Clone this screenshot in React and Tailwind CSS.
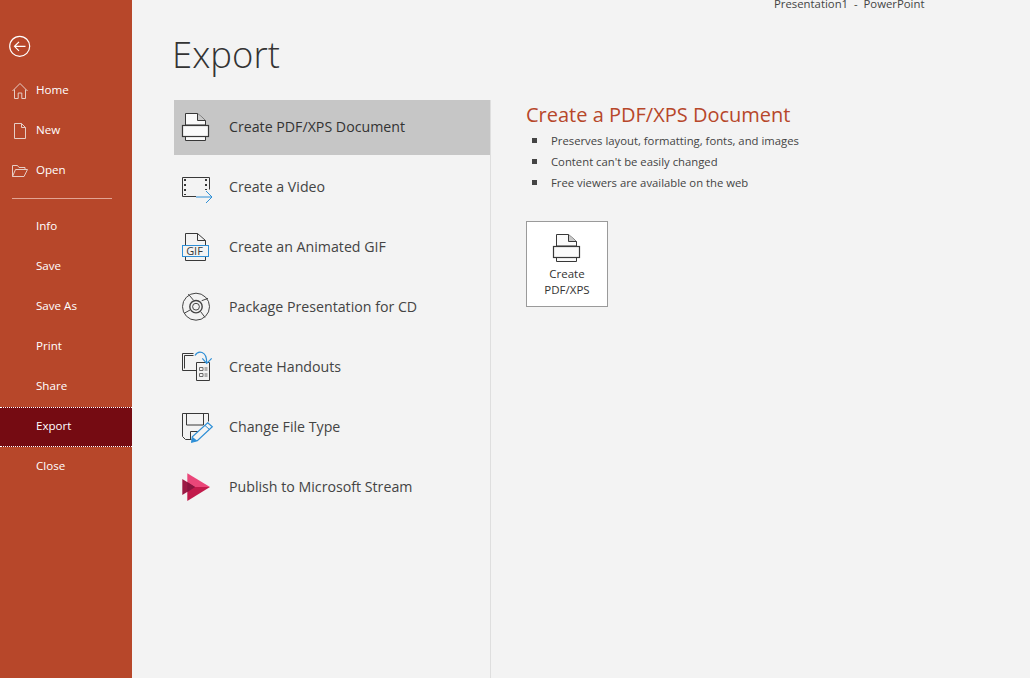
import React from "react";

const font = { fontFamily: '"Open Sans", "Noto Sans", sans-serif' };
const Icon = ({ children }) => (
  <svg width="32" height="32" viewBox="0 0 32 32" fill="none" overflow="visible">
    {children}
  </svg>
);
const D = "#383838";
const B = "#2e8fd6";

const Back = () => (
  <svg width="24" height="24" viewBox="0 0 24 24" fill="none" stroke="#fff" strokeWidth="1.2">
    <circle cx="11.700" cy="12.300" r="10" />
    <path d="M17.500 12.300H6.500M11 7.800l-4.500 4.500 4.500 4.500" />
  </svg>
);
const HomeI = () => (
  <svg width="16" height="16" viewBox="0 0 16 16" fill="none" stroke="#e6cdc5" strokeWidth="1">
    <path d="M.5 8 8 .5 15.500 8M2.500 6.500v9h3.700v-5.500h3.600v5.500h3.700v-9" />
  </svg>
);
const NewI = () => (
  <svg width="12" height="16" viewBox="0 0 12 16" fill="none" stroke="#e6cdc5" strokeWidth="1">
    <path d="M.5.5h7l4 4v11H.5zM7.500.5v4h4" />
  </svg>
);
const OpenI = () => (
  <svg width="16" height="12" viewBox="0 0 16 12" fill="none" stroke="#e6cdc5" strokeWidth="1">
    <path d="M.5 11.500V.5h5l1.500 2h6v2M.5 11.500h11.500l3.500-7H3.500z" />
  </svg>
);

const Printer = () => (
  <Icon>
    <path d="M3.500 14V2.500h12l8 7V14H3.500z" fill="#fafafa" stroke={D} />
    <path d="M15.500 2.500v7h8" fill="#c8c8c8" stroke={D} />
    <path d="M3.500 25v4.500h20V25z" fill="#fafafa" stroke={D} />
    <rect x=".5" y="14.500" width="26" height="11" fill="#fafafa" stroke={D} strokeWidth="1.200" />
  </Icon>
);
const VideoI = () => (
  <Icon>
    <path d="M14 25.500H.5V6.500h27v12" stroke={D} />
    <path d="M3 8v2M3 13v2M3 18v2M3 23v1M24 8v2M24 13v2M24 18v1" stroke={D} strokeWidth="2" />
    <path d="M14 26h15.500M24 20l6 6-6 6" stroke={B} />
  </Icon>
);
const GifI = () => (
  <Icon>
    <path d="M3.500 14V2.500h12l8 7V14M15.500 2.500v7h8M3.500 26v3.500h20V26" stroke={D} />
    <rect x=".5" y="14.500" width="26" height="11" fill="#f3f3f3" stroke={B} />
    <text x="12.500" y="24" textAnchor="middle" fontSize="11" fill={D} style={font}>GIF</text>
  </Icon>
);
const CdI = () => (
  <Icon>
    <g stroke="#444" transform="translate(14 15.700)">
      <circle r="13.500" />
      <circle r="6.200" strokeWidth="1.400" />
      <circle r="3.400" />
      <path d="M-2.700-6.700-7.700-12.700M5.700-6 12-8.300M4.700 5 9 10.700M-6 3.300-12 6.700" />
    </g>
  </Icon>
);
const HandoutI = () => (
  <Icon>
    <path d="M14 19.500H.5V2.500h11M2.500 17.500V4.500h9" stroke={D} />
    <path d="M14.500 11.500h13v18h-13z" fill="#f3f3f3" stroke={D} />
    <path d="M17.500 16.500h3.500v3h-3.500zM17.500 22.500h3.500v3h-3.500z" stroke="#6a6a6a" />
    <path d="M22.500 17h3M22.500 19h3M22.500 23h3M22.500 25h3" stroke="#6a6a6a" />
    <path d="M13 4.500C16-.5 25-1 24.700 12.300M20.300 7.300l4.400 5 5-5" stroke={B} strokeWidth="1.200" />
  </Icon>
);
const ChangeI = () => (
  <Icon>
    <path d="M26.500 10.500V2.500H.5v23l3 3h6" stroke={D} />
    <path d="M4.500 2.500v11.500h17V2.500M8.500 28.500v-8h9" stroke={D} />
    <path d="M25.700 11.700l4.600 4L15.300 29.700l-5.600 1.600 .6-5.600z" fill="#f3f3f3" stroke={B} strokeWidth="1.200" />
    <path d="M23 14.500l4.500 4" stroke={B} />
    <path d="M9.700 31.300l.6-5.600 5 4z" fill={B} />
  </Icon>
);
const StreamI = () => (
  <Icon>
    <path d="M5.300 2.300 28 16H5.300z" fill="#ea4679" />
    <path d="M5.300 30 28 16H5.300z" fill="#c21a4b" />
    <path d="M.3 8 13 16 .3 24z" fill="#9c1a45" />
    <path d="M5.300 11 13 16l-7.700 5z" fill="#8a1540" />
  </Icon>
);

const nav = [
  ["Home", <HomeI />],
  ["New", <NewI />],
  ["Open", <OpenI />],
];
const nav2 = ["Info", "Save", "Save As", "Print", "Share", "Export", "Close"];
const rows = [
  ["Create PDF/XPS Document", <Printer />],
  ["Create a Video", <VideoI />],
  ["Create an Animated GIF", <GifI />],
  ["Package Presentation for CD", <CdI />],
  ["Create Handouts", <HandoutI />],
  ["Change File Type", <ChangeI />],
  ["Publish to Microsoft Stream", <StreamI />],
];
const bullets = [
  "Preserves layout, formatting, fonts, and images",
  "Content can't be easily changed",
  "Free viewers are available on the web",
];

export default function App() {
  return (
    <div className="flex h-[678px] w-[1030px] overflow-hidden bg-[#f3f3f3] text-[#444]" style={font}>
      <aside className="flex w-[132px] shrink-0 flex-col bg-[#b7472a] text-[11.600px] text-white">
        <div className="flex h-[71px] items-start pl-[8px] pt-[34px]">
          <Back />
        </div>
        {nav.map(([t, icon]) => (
          <div key={t} className="flex h-[40px] items-center">
            <span className="flex w-[36px] justify-center pl-[4px]">{icon}</span>
            <span className="mb-[2px]">{t}</span>
          </div>
        ))}
        <div className="mb-[8px] ml-[12px] mt-[7px] h-px w-[100px] bg-[#e2a493]" />
        {nav2.map((t) =>
          t === "Export" ? (
            <div key={t} className="flex h-[40px] items-center border-y border-dotted border-white bg-[#750b12] pb-[2px] pl-[36px]">
              {t}
            </div>
          ) : (
            <div key={t} className="flex h-[40px] items-center pb-[2px] pl-[36px]">
              {t}
            </div>
          )
        )}
      </aside>

      <main className="relative min-w-0 flex-1">
        <div className="absolute left-[642px] top-[-5px] whitespace-pre text-[11.350px] leading-[18px] text-[#444]">
          Presentation1  -  PowerPoint
        </div>
        <h1 className="ml-[40px] pt-[29px] text-[36.500px] font-light leading-[50px] text-[#333]">Export</h1>
        <div className="mt-[21px] flex h-[578px]">
          <div className="ml-[42px] w-[317px] border-r border-[#dedede]">
            {rows.map(([t, icon], i) => (
              <div
                key={t}
                className={
                  i === 0
                    ? "mb-[5px] flex h-[55px] items-center bg-[#c6c6c6] pb-[1px] pl-[8px] text-[14.200px] text-[#333]"
                    : "mb-[5px] flex h-[55px] items-center pb-[1px] pl-[8px] text-[14.200px] text-[#444]"
                }
              >
                <span className="flex w-[47px] shrink-0 items-center">{icon}</span>
                <span>{t}</span>
              </div>
            ))}
          </div>
          <div className="ml-[35px]">
            <h2 className="text-[20px] leading-[30px] text-[#b7472a]">Create a PDF/XPS Document</h2>
            <ul className="mt-[1px]">
              {bullets.map((b) => (
                <li key={b} className="flex h-[21px] items-center text-[11.300px] text-[#444]">
                  <span className="mb-[3px] ml-[6px] mr-[14px] h-[5px] w-[5px] bg-[#444]" />
                  {b}
                </li>
              ))}
            </ul>
            <button className="mt-[27px] flex h-[86px] w-[82px] flex-col items-center border border-[#9a9a9a] bg-white pt-[10px] text-[11.500px] leading-[16px] text-[#333]">
              <span className="ml-[26px] self-start">
                <Printer />
              </span>
              <span className="mt-[2px]">Create</span>
              <span>PDF/XPS</span>
            </button>
          </div>
        </div>
      </main>
    </div>
  );
}
